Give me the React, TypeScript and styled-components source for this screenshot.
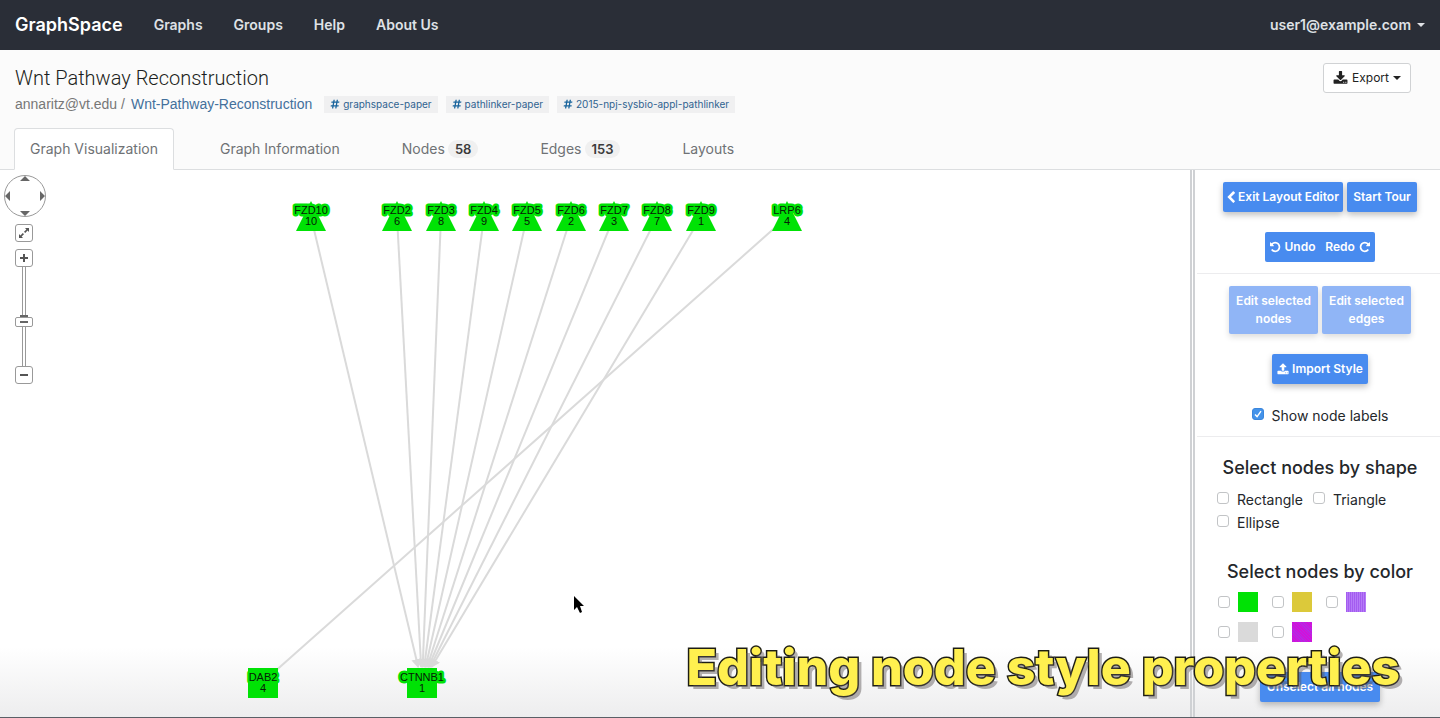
import React, { useState } from "react";
import styled, { createGlobalStyle } from "styled-components";
import { FaHashtag } from "react-icons/fa";

const GlobalStyle = createGlobalStyle`
  *, *::before, *::after { box-sizing: border-box; }
  body {
    margin: 0;
    font-family: Inter, "Liberation Sans", sans-serif;
    font-size: 14px;
    line-height: 20px;
    color: #24272b;
    background: #fff;
  }
  button, input { font: inherit; margin: 0; }
  a { text-decoration: none; }
`;

const Page = styled.div`
  position: relative;
  display: flex;
  flex-direction: column;
  min-height: 100vh;
  border-bottom: 1px solid #5a5f66;
  overflow: hidden;
`;

const NavBar = styled.nav`
  display: flex;
  align-items: center;
  gap: 31px;
  height: 50px;
  padding: 0 15px;
  background: #2a2e37;
`;

const Brand = styled.a`
  font-size: 18px;
  font-weight: 600;
  color: #fff;
`;

const NavLink = styled.a`
  font-weight: 600;
  color: #dfe1e5;
`;

const UserMenu = styled.button`
  display: flex;
  align-items: center;
  gap: 6px;
  margin-left: auto;
  padding: 0;
  border: 0;
  background: none;
  font-weight: 600;
  color: #dfe1e5;
`;

const Caret = styled.span`
  border: 4px solid transparent;
  border-top-color: currentColor;
  border-bottom: 0;
`;

const PageHead = styled.header`
  padding: 13px 14px 0;
  background: #fbfbfb;
  border-bottom: 1px solid #dcdee0;
`;

const TitleRow = styled.div`
  display: flex;
  justify-content: space-between;
  align-items: flex-start;
  padding: 0 15px 0 1px;
`;

const Title = styled.h1`
  margin: 0;
  font-family: Roboto, Inter, sans-serif;
  font-size: 20px;
  line-height: 30px;
  font-weight: 300;
  color: #1c1e20;
`;

const Crumbs = styled.div`
  display: flex;
  align-items: center;
  gap: 6px;
  height: 22px;
  font-family: "Liberation Sans", Arial, sans-serif;
  color: #777;
`;

const OwnerLink = styled.a`
  color: #43709c;
`;

const Tags = styled.div`
  display: flex;
  gap: 8px;
  padding-left: 6px;
  font-family: Inter, sans-serif;
`;

const Tag = styled.a`
  display: flex;
  align-items: center;
  gap: 3px;
  height: 17px;
  padding: 0 6px;
  background: #f0f0f1;
  font-size: 10px;
  line-height: 17px;
  color: #2f6390;
  svg { color: #17639c; }
`;

const ExportButton = styled.button`
  display: flex;
  align-items: center;
  justify-content: center;
  gap: 4px;
  width: 88px;
  height: 30px;
  padding: 0;
  border: 1px solid #d0d2d4;
  border-radius: 3px;
  background: #fff;
  font-size: 12px;
  color: #222;
`;

const Tabs = styled.div`
  display: flex;
  gap: 30px;
  margin: 13px 0 -1px;
`;

const Tab = styled.button<{ $active?: boolean }>`
  display: flex;
  align-items: center;
  gap: 3px;
  height: 42px;
  padding: 0 15px;
  border: 1px solid ${(p) => (p.$active ? "#dcdee0" : "transparent")};
  border-bottom-color: ${(p) => (p.$active ? "#fff" : "transparent")};
  border-radius: 4px 4px 0 0;
  background: ${(p) => (p.$active ? "#fff" : "none")};
  color: #6f7275;
`;

const Badge = styled.span`
  padding: 0 7px;
  border-radius: 9px;
  background: #f0f0f0;
  font-size: 13px;
  line-height: 18px;
  font-weight: 600;
  color: #3a3a3a;
`;

const Workspace = styled.main`
  display: flex;
  flex: 1;
  background: linear-gradient(to top, #ededee 0, #fff 70px);
`;

const Canvas = styled.section`
  position: relative;
  flex: 1;
  min-width: 0;
`;

const Graph = styled.svg`
  display: block;
  width: 100%;
  height: 100%;
  font-family: "Liberation Sans", Arial, sans-serif;
  font-size: 11px;
`;

const PanZoom = styled.div`
  position: absolute;
  top: 5px;
  left: 4px;
  display: flex;
  flex-direction: column;
  align-items: center;
`;

const PanPad = styled.button`
  width: 42px;
  height: 42px;
  padding: 0;
  border: 0;
  background: none;
  svg { display: block; }
`;

const ZoomButton = styled.button<{ $gap?: number }>`
  display: flex;
  align-items: center;
  justify-content: center;
  width: 18px;
  height: 18px;
  margin: ${(p) => p.$gap ?? 0}px 2px 0 0;
  padding: 0;
  border: 1px solid #999;
  border-radius: 3px;
  background: #fff;
`;

const ZoomSlider = styled.input`
  appearance: none;
  writing-mode: vertical-lr;
  direction: rtl;
  width: 18px;
  height: 99px;
  margin-right: 2px;
  background: linear-gradient(#666, #666) center 48px / 8px 2px no-repeat,
    linear-gradient(90deg, #999 1px, #fff 1px, #fff 3px, #999 3px) center / 4px 100% no-repeat;
  &::-webkit-slider-thumb {
    appearance: none;
    width: 18px;
    height: 10px;
    border: 1px solid #999;
    border-radius: 2px;
    background: linear-gradient(#666, #666) center / 8px 2px no-repeat, #fff;
  }
`;

const Sidebar = styled.aside`
  flex: 0 0 250px;
  padding-left: 2px;
  border-left: 5px double #cfd1d4;
`;

const Group = styled.section`
  display: flex;
  flex-direction: column;
  align-items: center;
  gap: 20px;
  padding: 12px 0 11px 3px;
  border-bottom: 1px solid #ececee;
`;

const StyleGroup = styled(Group)`
  padding-bottom: 9px;
`;

const SelectGroup = styled(Group)`
  gap: 8px;
  padding: 19px 0 15px 3px;
  border-bottom: 0;
`;

const ButtonRow = styled.div`
  display: flex;
  gap: 4px;
`;

const Action = styled.button<{ $w: number }>`
  display: flex;
  align-items: center;
  justify-content: center;
  gap: 3px;
  width: ${(p) => p.$w}px;
  min-height: 30px;
  padding: 0 4px;
  border: 0;
  border-radius: 2px;
  background: #488bef;
  box-shadow: 0 3px 6px rgba(0, 0, 0, 0.25);
  font-size: 12px;
  line-height: 18px;
  font-weight: 600;
  color: #fff;
  white-space: nowrap;
  &:disabled {
    min-height: 48px;
    background: #90b5f6;
    box-shadow: 0 3px 6px rgba(0, 0, 0, 0.14);
    white-space: normal;
  }
`;

const HistoryButtons = styled.div`
  display: flex;
  border-radius: 2px;
  overflow: hidden;
  ${Action} { border-radius: 0; box-shadow: none; }
`;

const Box = styled.input`
  appearance: none;
  flex: none;
  width: 12px;
  height: 12px;
  border: 1px solid #c2c4c6;
  border-radius: 3px;
  background: #fff;
  &:checked {
    border-color: #3b86dc;
    background: #4493ea url("data:image/svg+xml,%3Csvg xmlns='http://www.w3.org/2000/svg' viewBox='0 0 10 10'%3E%3Cpath d='M2 5.4 4.1 7.6 8 2.2' fill='none' stroke='white' stroke-width='1.4'/%3E%3C/svg%3E") center / 10px 10px no-repeat;
  }
`;

const Check = styled.label`
  display: flex;
  align-items: center;
  gap: 8px;
`;

const TextCheck = styled(Check)`
  line-height: 23px;
  ${Box} { margin-bottom: 3px; }
`;

const SideHeading = styled.h2`
  margin: 0;
  font-size: 18px;
  line-height: 24px;
  font-weight: 500;
  color: #24272b;
`;

const ShapeList = styled.div`
  display: flex;
  flex-wrap: wrap;
  align-self: stretch;
  column-gap: 10px;
  margin-bottom: 18px;
  padding: 0 17px;
`;

const ColorList = styled.div`
  display: grid;
  grid-template-columns: repeat(3, 54px);
  row-gap: 10px;
  align-self: stretch;
  margin-bottom: 22px;
  padding-left: 18px;
`;

const Swatch = styled.span<{ $fill: string }>`
  width: 20px;
  height: 20px;
  background: ${(p) => p.$fill};
`;

const Caption = styled.p`
  position: absolute;
  right: 40px;
  bottom: 20px;
  margin: 0;
  font-family: Inter, sans-serif;
  font-size: 50px;
  line-height: 60px;
  font-weight: 800;
  color: #fff04f;
  white-space: nowrap;
  -webkit-text-stroke: 3px #1d1d14;
  paint-order: stroke fill;
  text-shadow: 4px 4px 0 rgba(90, 85, 85, 0.45);
  pointer-events: none;
`;

const icons = {
  undo: "M1536 896q0 156-61 298t-164 245-245 164-298 61q-172 0-327-72.5t-264-204.5q-7-10-6.5-22.5t8.5-20.5l137-138q10-9 25-9 16 2 23 12 73 95 179 147t225 52q104 0 198.5-40.5t163.5-109.5 109.5-163.5 40.5-198.5-40.5-198.5-109.5-163.5-163.5-109.5-198.5-40.5q-98 0-188 35.5t-160 101.5l137 138q31 30 14 69-17 40-59 40h-448q-26 0-45-19t-19-45v-448q0-42 40-59 39-17 69 14l130 129q107-101 244.5-156.5t284.5-55.5q156 0 298 61t245 164 164 245 61 298z",
  download: "M1344 1344q0-26-19-45t-45-19-45 19-19 45 19 45 45 19 45-19 19-45zm256 0q0-26-19-45t-45-19-45 19-19 45 19 45 45 19 45-19 19-45zm128-224v320q0 40-28 68t-68 28h-1472q-40 0-68-28t-28-68v-320q0-40 28-68t68-28h465l135 136q58 56 136 56t136-56l136-136h464q40 0 68 28t28 68zm-325-569q17 41-14 70l-448 448q-18 19-45 19t-45-19l-448-448q-31-29-14-70 17-39 59-39h256v-448q0-26 19-45t45-19h256q26 0 45 19t19 45v448h256q42 0 59 39z",
  upload: "M1344 1472q0-26-19-45t-45-19-45 19-19 45 19 45 45 19 45-19 19-45zm256 0q0-26-19-45t-45-19-45 19-19 45 19 45 45 19 45-19 19-45zm128-224v320q0 40-28 68t-68 28h-1472q-40 0-68-28t-28-68v-320q0-40 28-68t68-28h427q21 56 70.5 92t110.5 36h256q61 0 110.5-36t70.5-92h427q40 0 68 28t28 68zm-325-648q-17 40-59 40h-256v448q0 26-19 45t-45 19h-256q-26 0-45-19t-19-45v-448h-256q-42 0-59-40-17-39 14-69l448-448q18-19 45-19t45 19l448 448q31 30 14 69z",
  back: "M1427 301l-531 531 531 531q19 19 19 45t-19 45l-166 166q-19 19-45 19t-45-19l-742-742q-19-19-19-45t19-45l742-742q19-19 45-19t45 19l166 166q19 19 19 45t-19 45z",
};

function Icon({ name, size = 13, flip, crop }: { name: keyof typeof icons; size?: number; flip?: boolean; crop?: boolean }) {
  return (
    <svg width={crop ? 8 : size} height={size} viewBox={crop ? "344 0 1104 1792" : "0 0 1792 1792"} fill="currentColor" aria-hidden="true">
      <path d={icons[name]} transform={flip ? "matrix(-1 0 0 1 1792 0)" : undefined} />
    </svg>
  );
}

const receptors = [
  { x: 311, name: "FZD10", rank: 10 },
  { x: 397, name: "FZD2", rank: 6 },
  { x: 441, name: "FZD3", rank: 8 },
  { x: 484, name: "FZD4", rank: 9 },
  { x: 527, name: "FZD5", rank: 5 },
  { x: 571, name: "FZD6", rank: 2 },
  { x: 614, name: "FZD7", rank: 3 },
  { x: 657, name: "FZD8", rank: 7 },
  { x: 701, name: "FZD9", rank: 1 },
  { x: 787, name: "LRP6", rank: 4 },
];
const targets = [
  { x: 263, name: "DAB2", rank: 4 },
  { x: 422, name: "CTNNB1", rank: 1 },
];
const GREEN = "#00e205";

function NodeLabel({ x, y, name, rank }: { x: number; y: number; name: string; rank: number }) {
  return (
    <g textAnchor="middle" fill="#062006">
      <text x={x} y={y} stroke={GREEN} strokeWidth="5" strokeLinejoin="round" paintOrder="stroke">{name}</text>
      <text x={x} y={y + 11}>{rank}</text>
    </g>
  );
}

function PathwayGraph() {
  const hub = targets[1];
  return (
    <Graph role="img" aria-label="Wnt pathway graph">
      <defs>
        <marker id="arrow" markerUnits="userSpaceOnUse" markerWidth="10" markerHeight="10" refX="8" refY="5" orient="auto">
          <path d="M0 0 9 5 0 10z" fill="#dadada" />
        </marker>
      </defs>
      <g stroke="#dadada" strokeWidth="2">
        {receptors.slice(0, 9).map((n) => {
          const endX = hub.x + ((n.x - hub.x) * 16) / 466;
          return <line key={n.name} x1={n.x} y1={47} x2={endX} y2={497} markerEnd="url(#arrow)" />;
        })}
        <line x1={787} y1={47} x2={263} y2={512} />
      </g>
      {receptors.map((n) => (
        <g key={n.name}>
          <path d={`M${n.x} 31l15 30h-30z`} fill={GREEN} />
          <NodeLabel x={n.x} y={44} name={n.name} rank={n.rank} />
        </g>
      ))}
      {targets.map((n) => (
        <g key={n.name}>
          <rect x={n.x - 15} y={498} width="30" height="30" fill={GREEN} />
          <NodeLabel x={n.x} y={511} name={n.name} rank={n.rank} />
        </g>
      ))}
      <path d="M574 426v14l3-3 3 6 2-1-2-6h4z" fill="#000" stroke="#fff" strokeWidth="1" paintOrder="stroke" />
    </Graph>
  );
}

function Controls() {
  return (
    <PanZoom>
      <PanPad aria-label="Pan">
        <svg width="42" height="42" viewBox="0 0 42 42">
          <circle cx="21" cy="21" r="20.5" fill="#fff" stroke="#999" />
          <path d="M21 1l5 5H16zM21 41l5-5H16zM1 21l5-5v10zM41 21l-5-5v10z" fill="#666" />
        </svg>
      </PanPad>
      <ZoomButton $gap={7} aria-label="Fit to screen">
        <svg width="10" height="10" viewBox="0 0 10 10" fill="#555">
          <path d="M6 0h4v4L8.600 2.600 6.200 5 5 3.800 7.400 1.400zM4 10H0V6l1.400 1.400L3.800 5 5 6.200 2.600 8.600z" />
        </svg>
      </ZoomButton>
      <ZoomButton $gap={7} aria-label="Zoom in">
        <svg width="8" height="8"><path d="M3 0h2v3h3v2H5v3H3V5H0V3h3z" fill="#555" /></svg>
      </ZoomButton>
      <ZoomSlider type="range" aria-label="Zoom level" min={0} max={100} defaultValue={44} />
      <ZoomButton aria-label="Zoom out">
        <svg width="8" height="2"><path d="M0 0h8v2H0z" fill="#555" /></svg>
      </ZoomButton>
    </PanZoom>
  );
}

const shapes = ["Rectangle", "Triangle", "Ellipse"];
const colors = [
  { name: "green", fill: "#00e205" },
  { name: "yellow", fill: "#dcc93a" },
  { name: "violet", fill: "repeating-linear-gradient(90deg, #a45cf0 0 1px, #b57bf7 1px 2px)" },
  { name: "grey", fill: "#dadada" },
  { name: "magenta", fill: "repeating-linear-gradient(45deg, #d50fd8 0 1px, #b32be6 1px 2px)" },
];

export default function App() {
  const [labels, setLabels] = useState(true);
  return (
    <Page>
      <GlobalStyle />
      <NavBar>
        <Brand href="#">GraphSpace</Brand>
        {["Graphs", "Groups", "Help", "About Us"].map((item) => (
          <NavLink key={item} href="#">{item}</NavLink>
        ))}
        <UserMenu>user1@example.com <Caret /></UserMenu>
      </NavBar>
      <PageHead>
        <TitleRow>
          <div>
            <Title>Wnt Pathway Reconstruction</Title>
            <Crumbs>
              <span>annaritz@vt.edu /</span>
              <OwnerLink href="#">Wnt-Pathway-Reconstruction</OwnerLink>
              <Tags>
                {["graphspace-paper", "pathlinker-paper", "2015-npj-sysbio-appl-pathlinker"].map((tag) => (
                  <Tag key={tag} href="#"><FaHashtag size={10} />{tag}</Tag>
                ))}
              </Tags>
            </Crumbs>
          </div>
          <ExportButton><Icon name="download" size={15} />Export <Caret /></ExportButton>
        </TitleRow>
        <Tabs>
          <Tab $active>Graph Visualization</Tab>
          <Tab>Graph Information</Tab>
          <Tab>Nodes <Badge>58</Badge></Tab>
          <Tab>Edges <Badge>153</Badge></Tab>
          <Tab>Layouts</Tab>
        </Tabs>
      </PageHead>
      <Workspace>
        <Canvas>
          <PathwayGraph />
          <Controls />
        </Canvas>
        <Sidebar>
          <Group>
            <ButtonRow>
              <Action $w={120}><Icon name="back" size={13} crop />Exit Layout Editor</Action>
              <Action $w={70}>Start Tour</Action>
            </ButtonRow>
            <HistoryButtons>
              <Action $w={55}><Icon name="undo" size={12} />Undo</Action>
              <Action $w={55}>Redo<Icon name="undo" size={12} flip /></Action>
            </HistoryButtons>
          </Group>
          <StyleGroup>
            <ButtonRow>
              <Action $w={89} disabled>Edit selected nodes</Action>
              <Action $w={89} disabled>Edit selected edges</Action>
            </ButtonRow>
            <Action $w={96}><Icon name="upload" size={12} />Import Style</Action>
            <TextCheck>
              <Box type="checkbox" checked={labels} onChange={(e) => setLabels(e.target.checked)} />
              Show node labels
            </TextCheck>
          </StyleGroup>
          <SelectGroup>
            <SideHeading>Select nodes by shape</SideHeading>
            <ShapeList>
              {shapes.map((s) => (
                <TextCheck key={s}><Box type="checkbox" />{s}</TextCheck>
              ))}
            </ShapeList>
            <SideHeading>Select nodes by color</SideHeading>
            <ColorList>
              {colors.map((c) => (
                <Check key={c.name}>
                  <Box type="checkbox" aria-label={c.name} />
                  <Swatch $fill={c.fill} />
                </Check>
              ))}
            </ColorList>
            <Action $w={120}>Unselect all nodes</Action>
          </SelectGroup>
        </Sidebar>
      </Workspace>
      <Caption>Editing node style properties</Caption>
    </Page>
  );
}
